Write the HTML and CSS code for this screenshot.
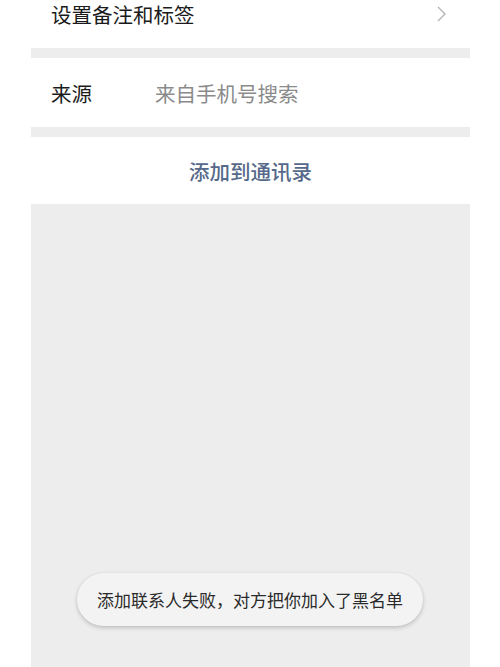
FILE: index.html
```html
<!DOCTYPE html>
<html lang="zh-CN">
<head>
<meta charset="utf-8">
<link rel="stylesheet" href="styles.css">
</head>
<body>
<div class="page">
  <div class="panel">
    <div class="row row-first">
      <span class="row-title">设置备注和标签</span>
      <svg class="chevron" width="12" height="16" viewBox="0 0 12 16"><polyline points="2,1 9,8 2,15" fill="none" stroke="#b5b5b5" stroke-width="1.4"/></svg>
    </div>
    <div class="gap"></div>
    <div class="row">
      <span class="label">来源</span>
      <span class="value">来自手机号搜索</span>
    </div>
    <div class="gap"></div>
    <div class="row row-action">
      <span class="action">添加到通讯录</span>
    </div>
    <div class="rest">
      <div class="toast">添加联系人失败，对方把你加入了黑名单</div>
    </div>
  </div>
</div>
</body>
</html>
```
FILE: styles.css
```css
html, body {
  margin: 0;
  padding: 0;
  background: #ffffff;
}
body {
  font-family: "Noto Sans CJK SC", "Noto Sans", sans-serif;
  color: #1b1b1b;
  width: 500px;
  height: 667px;
  overflow: hidden;
}
.page {
  padding: 0 30px 0 31px;
}
.panel {
  display: flex;
  flex-direction: column;
}
.row {
  display: flex;
  align-items: center;
  height: 69px;
  padding: 0 20px;
  background: #ffffff;
  font-size: 20.5px;
}
.row-first {
  margin-top: -21px;
  justify-content: space-between;
}
.row-title {
  color: #1b1b1b;
}
.chevron {
  margin-right: 2px;
}
.gap {
  height: 10px;
  background: #ededed;
}
.label {
  width: 104px;
  color: #1b1b1b;
}
.value {
  color: #8a8a8a;
}
.row-action {
  height: 67px;
  justify-content: center;
}
.action {
  color: #56698a;
  font-weight: 500;
}
.rest {
  position: relative;
  height: 463px;
  background: #ededed;
}
.toast {
  position: absolute;
  left: 46px;
  top: 369px;
  width: 346px;
  height: 53px;
  box-sizing: border-box;
  border-radius: 27px;
  background: #f3f3f3;
  box-shadow: 0 2px 4px rgba(0,0,0,0.18), 0 0 2px rgba(0,0,0,0.08);
  display: flex;
  align-items: center;
  justify-content: center;
  font-size: 17px;
  color: #2a2a2a;
}
```
